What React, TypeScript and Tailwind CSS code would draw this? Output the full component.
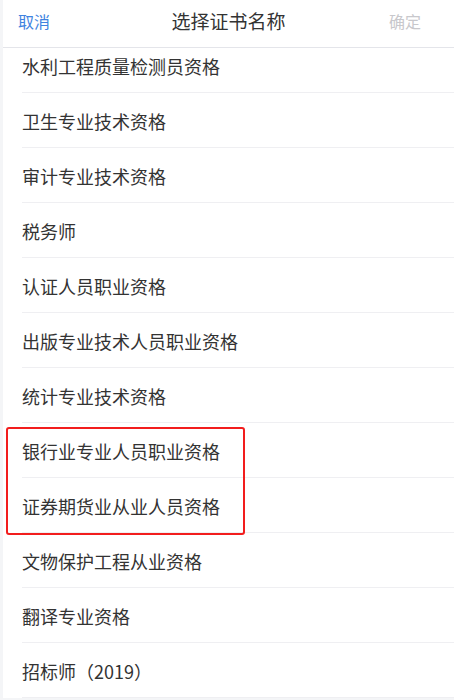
import React from "react";

const items = [
  "水利工程质量检测员资格",
  "卫生专业技术资格",
  "审计专业技术资格",
  "税务师",
  "认证人员职业资格",
  "出版专业技术人员职业资格",
  "统计专业技术资格",
  "银行业专业人员职业资格",
  "证券期货业从业人员资格",
  "文物保护工程从业资格",
  "翻译专业资格",
  "招标师（2019）",
];

export default function App() {
  return (
    <div
      className="w-[454px] h-[700px] bg-[#f4f5f7] overflow-hidden"
      style={{ fontFamily: '"Noto Sans CJK SC", "Noto Sans", sans-serif' }}
    >
      <div className="relative ml-[3px] h-[698px] bg-white overflow-hidden">
        <div className="relative flex items-center justify-between h-[48px] border-b border-[#e4e5ea] pl-[15px] pr-[33px] pb-[6px]">
          <span className="text-[16px] text-[#3f83e0]">取消</span>
          <span className="absolute left-0 right-0 top-[8px] text-center text-[19px] leading-[26px] text-[#333333] pointer-events-none">
            选择证书名称
          </span>
          <span className="text-[16px] text-[#c8c8cc]">确定</span>
        </div>
        <div className="overflow-hidden">
          <div className="-mt-[10px]">
            {items.map((t) => (
              <div key={t} className="pl-[19px]">
                <div className="h-[55px] flex items-center pt-[3px] border-b border-[#efeff2] text-[18px] text-[#333333]">
                  {t}
                </div>
              </div>
            ))}
          </div>
        </div>
        <div className="absolute left-[3px] top-[427px] w-[239px] h-[108px] border-2 border-[#f21d1d] rounded-[3px]" />
      </div>
    </div>
  );
}
